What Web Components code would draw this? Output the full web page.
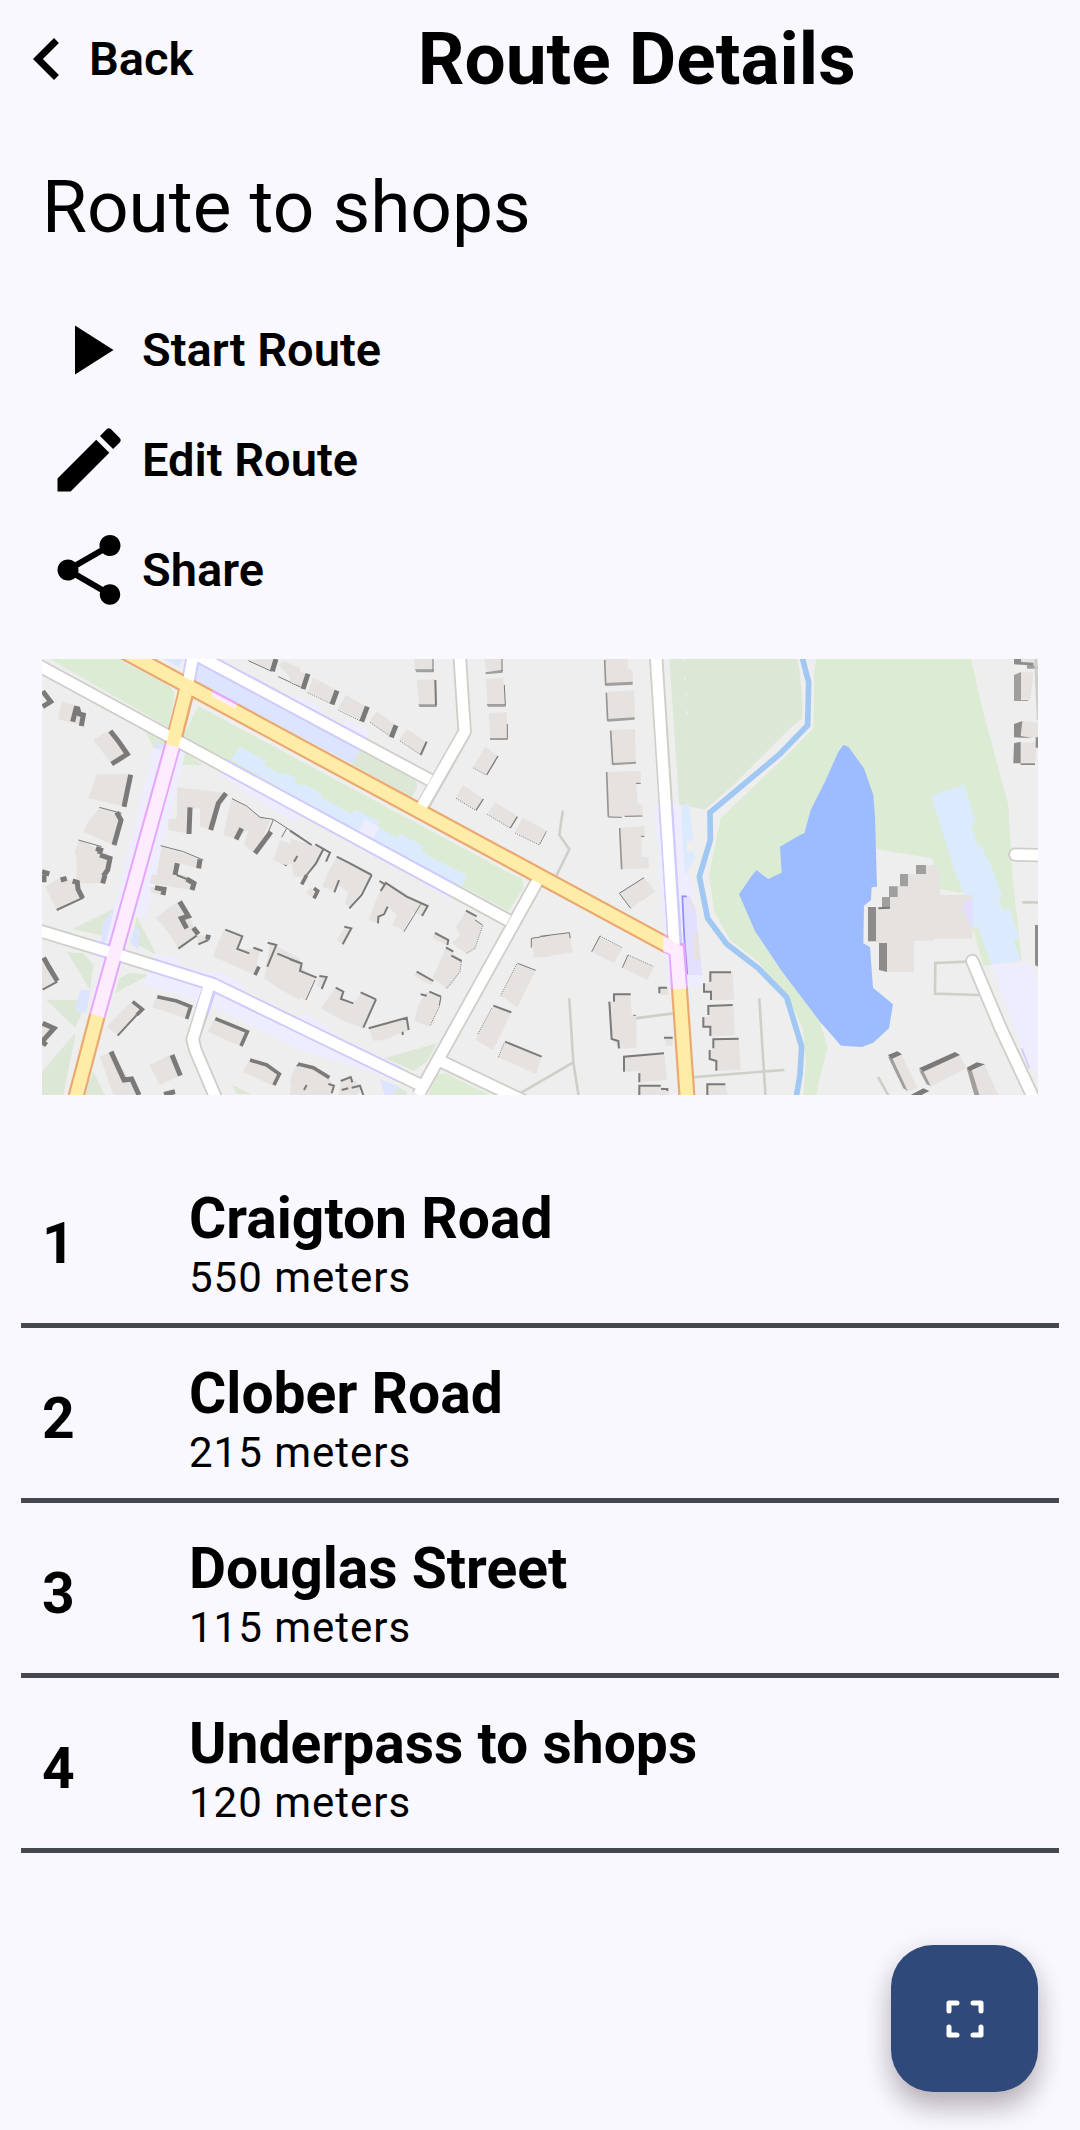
<!DOCTYPE html>
<html lang="en">
<head>
<meta charset="utf-8">
<meta name="viewport" content="width=device-width, initial-scale=1">
<title>Route Details</title>
<style>
  html { background: #f9f8ff; }
  body { margin: 0; font-family: Roboto, "Liberation Sans", sans-serif; color: #000; }
</style>
</head>
<body>
<route-page>
  <page-header slot="header" heading="Route Details"></page-header>
  <span slot="name">Route to shops</span>
  <action-button slot="actions" icon="play">Start Route</action-button>
  <action-button slot="actions" icon="edit">Edit Route</action-button>
  <action-button slot="actions" icon="share">Share</action-button>
  <route-map slot="map"></route-map>
  <waypoint-item slot="waypoints" number="1" distance="550 meters">Craigton Road</waypoint-item>
  <waypoint-item slot="waypoints" number="2" distance="215 meters">Clober Road</waypoint-item>
  <waypoint-item slot="waypoints" number="3" distance="115 meters">Douglas Street</waypoint-item>
  <waypoint-item slot="waypoints" number="4" distance="120 meters">Underpass to shops</waypoint-item>
  <scan-fab slot="fab"></scan-fab>
</route-page>

<template id="map-template">
<style>
  :host { display: block; }
  svg { display: block; width: 100%; height: auto; }
  .g1 { fill: #dcebd3; } .g2 { fill: #dce7d6; } .lb { fill: #dbebfd; } .lv { fill: #eeedff; } .bl { fill: #dce4ff; }
  .line { fill: none; stroke-linejoin: round; }
  .cg { stroke: #cfcfca; stroke-width: 43; } .cl { stroke: #cfcbff; stroke-width: 43; } .w { stroke: #fff; stroke-width: 32; }
  .co { stroke: #e9a970; stroke-width: 51; } .y { stroke: #ffeca6; stroke-width: 38; }
  .cp { stroke: #e7a6fd; stroke-width: 51; } .p { stroke: #fdecfe; stroke-width: 39; }
  .path { stroke: #cfcfca; stroke-width: 8; fill: none; stroke-linecap: round; }
  .b { fill: #e6e2df; } .s { fill: none; stroke: #7b7a78; stroke-width: 15; } .m { fill: none; stroke: #7b7a78; stroke-width: 6; }
  .t { fill: none; stroke: #7b7a78; stroke-width: 3; } .d { fill: none; stroke: #7b7a78; stroke-width: 3; stroke-dasharray: 3 4; }
  .q { fill: #a09f9d; }
</style>
<svg viewBox="6 27 2988 1308" role="img" aria-label="Map of the route">
  <rect x="6" y="27" width="2988" height="1308" fill="#eee"/>
  <!-- grass and parkland -->
  <path class="g1" d="M30 27H235L385 106Q405 122 403 140L385 232ZM475 168L1420 675 1448 687 1450 715 1405 783 430 258ZM312 238L380 275 348 305ZM420 300L490 345H415Z"/>
  <path class="g2" d="M957 300L1118 383Q1134 395 1130 415L1115 443 935 342ZM1888 27H2275L2292 200 2250 235 2005 480 1918 465Z"/>
  <path class="g1" d="M2328 27H2793L2828 180 2905 465 2917 675 2945 930 2830 947 2798 835 2775 730 2700 718V700L2675 625 2510 598H2450V800L2300 1050 2340 1115 2363 1193 2335 1300 2330 1335H2290L2298 1235 2288 1135 2260 1075 2155 935 2070 870 2023 785 2007 675 2042 505 2250 305 2318 237V100Z"/>
  <path class="g2" d="M97 838L220 777 195 845 180 855ZM290 800L350 915 275 875ZM82 907L130 910 160 945 150 1020ZM240 985L270 968 325 975 225 1030ZM18 1049L143 1050 105 1132ZM6 1265L108 1147 70 1335H6ZM160 1265L195 1335H130ZM577 1305L635 1333H590ZM1033 1225L1190 1180 1160 1235 1122 1262ZM1060 1305L1100 1325V1335H1040Z"/>
  <path class="g1" d="M1215 1270L1350 1335H1165L1190 1275Z"/>
  <path d="M1931 27V215" stroke="#eee" stroke-width="4" stroke-dasharray="10 42" transform="rotate(-3.5 1931 27)"/>
  <!-- highlighted areas -->
  <path class="lb" d="M600 290L678 332 672 345 727 375 735 365 772 388 765 398 787 408 792 402 847 432 845 443 933 490 945 477 1018 515 1014 530 1072 565 1080 550 1152 590 1143 605 1280 675 1265 715 1200 690 575 330ZM2673 437L2772 404 2808 518 2794 522 2813 588 2825 585 2842 632H2848L2864 675 2888 740 2875 747 2888 780 2908 775 2938 865 2922 872 2943 932 2855 945 2813 830 2795 835 2764 763 2780 753 2748 675ZM1925 465L1947 462 1960 570 1940 575 1942 605H1960L1966 625 1935 675H1925Z"/>
  <path class="bl" d="M475 40L957 300 937 342 462 92ZM370 27H430L415 50ZM340 275L375 285 355 308ZM185 880V825L222 775 240 860ZM270 875L285 830 300 840 295 900ZM120 1020H150L140 1090 106 1080ZM1020 1288L1075 1308 1060 1335H1035Z"/>
  <path class="lv" d="M550 380L695 478 765 515 790 490 1100 660 1230 755 1240 725 560 350ZM755 160L775 135 845 175 835 205ZM905 230L920 208 988 245 975 280ZM975 507L1018 532 1000 565 955 545ZM1843 467L1920 465 1935 675H1950L1975 825 1990 1005 1940 1015H1885L1858 675ZM310 1005L345 910 420 925 415 945 520 970 540 967 608 1000V1025L1080 1275 1070 1290 780 1200 490 1055ZM780 1115L790 1090 872 1135 860 1150ZM2855 945L2973 940 2994 995V1255L2970 1260Z"/>
  <path d="M365 300L170 1095" stroke="#eeedff" stroke-width="50"/><path d="M340 500L285 790M420 300L300 800" stroke="#eeedff" stroke-width="34"/>
  <!-- water -->
  <path fill="#9dbcff" d="M2410 285L2425 290 2472 355 2500 435 2505 500 2511 710 2495 712 2493 750 2472 767 2470 880 2490 891 2499 1013 2559 1063 2547 1135 2500 1178 2465 1191 2403 1187 2340 1115 2225 963 2145 843 2097 733 2137 675 2150 660 2168 675 2185 687 2205 677 2225 668 2220 590 2280 555 2293 550 2312 480 2355 395 2395 305Z"/>
  <path fill="none" stroke="#eee" stroke-width="34" d="M2286 20L2306 97 2303 226 2220 312 2010 488 2011 570 1978 680 2003 805"/>
  <path fill="none" stroke="#a1c8f2" stroke-width="17" d="M2286 20L2306 97 2303 226 2220 312 2010 488 2011 570 1978 680 2003 805 2060 882 2155 955 2240 1042 2285 1190 2280 1275 2268 1345"/>
  <!-- footpaths -->
  <path class="path" d="M1568 485L1558 555 1588 598 1550 675M1440 1330L1600 1237M1588 1048L1600 1237 1617 1345M1785 1105L1895 1091M1965 1281L2230 1260M2158 1048L2177 1345M2780 935L2686 939 2685 1031 2818 1035M2950 757H3000M2516 1284L2550 1345"/>
  <!-- buildings: each group spans one survey square -->
  <g>
    <path class="b" d="M65 155L102 165 128 195 120 225 54 207ZM160 270L207 240 265 312 215 342ZM170 373L275 372 258 470 145 445ZM180 472L240 490 215 583 130 545 145 515ZM118 570L210 615 195 700H110V620L103 605ZM412 412L550 428 520 538 480 530V475H460L440 550 385 540V508L410 505ZM575 445L665 500 690 515 645 612 612 585 625 540 585 565 550 555ZM365 588L482 628 475 655 420 640 400 700H345ZM715 45L732 33 780 55V110ZM625 30L700 27 700 62Z"/>
    <path class="s" d="M8 124L32 155 8 170M110 168L98 215M112 172L118 192 130 195 124 228M211 243L234 272 262 312 215 342M272 374L252 470M230 487L243 510 222 585M168 595L182 600 178 612M180 615L210 625 203 660 190 678M6 665L28 672M450 472L447 552M558 430L535 460 512 540M605 535L588 568M693 545L645 610M412 640L405 675M480 628L476 655M708 27L697 64M745 628L732 645"/>
    <path class="t" d="M625 32L695 64M715 80L780 110M178 472L245 490M576 446L620 468 660 502 700 508 780 560M362 587L430 605 490 630M115 570L185 590M700 510L685 545M740 535L725 562"/>
    <path class="b" d="M720 570L780 590V640L735 645 700 630Z"/>
  </g>
  <g transform="translate(750)">
    <path class="b" d="M0 50L55 75 35 110 0 97ZM70 83L142 122 125 160 53 125ZM168 134L230 170 213 212 145 175ZM260 185L320 225 303 260 238 215ZM350 237L407 275 390 312 328 270ZM373 27H430V62H375ZM380 90L435 87 438 165H388ZM583 27H636L638 63H588ZM588 86L640 84 646 163H592ZM597 190L650 186 653 264H600ZM585 291L624 318 588 374 550 352ZM518 405L580 447 557 480 497 443ZM617 456L683 500 660 534 592 490ZM697 502L770 542 750 585 675 547Z"/>
    <path class="s" d="M54 71L39 117M141 122L126 163M232 170L215 215M318 226L304 262"/><path class="m" d="M410 275L392 315"/>
    <path class="q" d="M375 58H431V67H380ZM385 163H440V171H388ZM590 162H647V170H594ZM586 67L638 59V68L588 73ZM600 264H653V270H600Z"/>
    <path class="m" d="M436 90L438 166"/><path class="t" d="M429 27V64M636 27V64M643 105L646 166M652 222V266"/><path class="m" style="stroke-width:4" d="M624 318L590 375M580 447L558 481M682 500L661 534"/>
    <path class="d" d="M0 97L38 115M53 128L125 162M145 180L213 214M240 217L303 260M330 273L390 313M550 354L588 375M498 445L557 481M592 493L660 534M675 549L748 585 770 545"/>
    <path class="b" d="M0 565L100 597 80 640 50 680H10ZM140 620L250 675H110Z"/>
    <path class="m" d="M0 542L65 585M76 583L120 608 108 635M100 598L78 640 50 675M140 620L180 640 245 675M22 618L12 635"/>
  </g>
  <g transform="translate(1500)">
    <path class="b" d="M192 27H263V52L278 62V98L195 102ZM200 126L282 120 285 204 203 208ZM213 240L285 237 288 338 218 340ZM200 366L302 363V400H288L294 460 308 464V498L206 500ZM240 533L314 528V560H304V620L326 622V655L244 656ZM0 530L18 545 0 580Z"/>
    <path class="q" d="M195 99L278 95V104L196 108ZM202 207L284 202V209L203 215ZM217 339L288 335V341L218 346Z"/>
    <path fill="none" stroke="#969593" stroke-width="5" d="M194 30L197 104M199 128L203 212M212 242L218 344M200 366L205 500M239 534L245 658"/>
    <path class="t" d="M205 501L245 502M254 499L307 498M288 400H302M303 559H313"/><path class="d" d="M18 545L0 580"/>
  </g>
  <g transform="translate(2250)">
    <path class="b" d="M690 67H730L722 148H688ZM695 213L744 218V263L690 260ZM690 278L741 275 735 340 688 338ZM672 27H744V52L710 50Z"/>
    <path class="q" d="M672 75L693 66V150H715V153H672ZM711 38L744 50V56H711Z"/><path fill="#8d8c8a" d="M672 27H693V36L730 38V46L672 43ZM672 222L697 213 692 258 728 264 672 262ZM672 280L692 275V340H670ZM737 262H744V293H737ZM692 340H735V345H692Z"/>
    <path d="M737 27L745 210" stroke="#cfcfca" stroke-width="9"/>
  </g>
  <g transform="translate(0 675)">
    <path class="b" d="M15 35L60 8 110 20 130 72 50 105ZM120 0H200L190 22 125 12ZM335 0H440L465 25 455 45 330 25ZM332 35L375 45 365 60 330 52ZM415 78L450 125 470 182 415 221 390 180 372 155 347 128ZM470 182L510 180 505 200 475 208ZM552 163L608 183 592 225 660 220 645 300 590 275 520 245 530 215ZM690 205L780 250V375L715 340 673 310ZM6 250L52 320 6 345ZM350 365L450 395 440 430 337 397ZM275 378L312 403 235 482 200 455ZM524 430L625 470 605 515 503 470ZM328 570L390 540 425 600 360 630ZM180 545L215 530 300 660H220ZM630 553L722 595 705 635 608 590ZM6 440L50 460 6 520ZM764 580L780 570V640L748 620Z"/>
    <path class="s" d="M12 0V22M62 15L80 10M98 18L112 22 114 42 128 70M195 0L188 25M440 12L462 25 456 45M345 38L372 43 369 60M419 80L445 123 424 130 440 160M460 158L475 178M497 185L511 188M11 248L26 275 52 318M213 530L252 615 275 612 297 660M396 540L421 602M8 445L42 460 6 500 20 510M372 658L405 650"/>
    <path class="s" style="stroke-width:11" d="M278 380L307 403 290 420M352 365L410 378 452 395 440 432M526 431L622 470 603 513M630 555L680 570 718 597 702 630M657 275L645 300"/>
    <path class="m" d="M410 0L460 20M130 68L50 105M470 182L415 221M505 195L475 208M556 164L607 184 592 222 628 235M640 218L668 228M683 203L709 210 682 275M712 236L780 264M290 420L233 482M8 344L52 320M780 570L770 572"/>
  </g>
  <g transform="translate(750 675)">
    <path class="b" d="M110 0H245L180 100 165 85 175 50 145 30 135 50 97 35ZM60 40L85 50 75 70 47 55ZM280 20L410 90 395 122 370 110 342 168 307 150 320 120 293 95 262 145 235 135ZM165 155L180 160 158 207 140 195ZM530 105L578 150 555 220 530 235 485 205 510 180 498 155ZM435 172L478 200 470 210 428 190ZM468 217L515 258 510 290 490 325 470 340 428 310ZM380 290L428 315 425 330 372 303ZM410 350L452 365 450 395 420 455 373 437 385 390ZM0 255L80 308 48 378 0 350ZM90 300L110 305 95 340 80 330ZM135 340L160 350 158 375 190 385 215 353 260 374 220 460 155 435 92 400ZM236 460L350 425 358 465 280 495 250 497ZM725 188L780 182V245L732 248ZM682 263L737 286 682 397 632 362ZM610 392L664 412 610 525 557 495 562 480ZM645 500L755 545 738 597 625 547ZM30 568L100 590 130 630 125 660H0L5 600ZM155 610L190 610 215 640 200 660H145Z"/>
    <path class="s" style="stroke-width:11" d="M50 0L35 28M72 40L83 48 72 70M24 567L70 578 118 608"/>
    <path class="m" d="M147 15L133 52M245 0L215 60 178 100M268 18L285 28 272 48M293 95L282 118 265 125 264 145M163 155L184 160 158 208M285 22L350 65 413 93 396 123M435 174L475 195 472 210M528 107L560 124M468 217L490 230M484 242L515 258M380 290L430 318M392 358L410 362M418 350L453 365M0 253L35 265 30 288 80 308M88 303L110 306 95 342M137 338L160 350 153 372 190 385M212 352L258 373M258 373L220 458M236 460L350 428 356 465M338 470L338 480M610 392L664 412M645 500L755 545M115 627L132 632 125 655M50 630L42 645M152 618L182 606 187 622M155 645L175 640M185 638L210 632 220 660"/>
    <path class="t" d="M392 88L342 170M75 315L48 375M724 190L780 182M724 190V218M683 265L737 286M555 135L577 150M453 365L448 390"/><path class="d" d="M578 152L555 220 530 235M514 260L510 290 470 340M452 370L448 395 420 453M680 267L632 362M605 400L562 480M642 505L625 547"/>
  </g>
  <g transform="translate(1500 675)">
    <path class="b" d="M240 52L312 8 346 50 272 100ZM0 187L88 174 98 232 0 247ZM178 182L247 218 222 265 155 230ZM265 240L342 275 322 314 247 278ZM360 340L385 338V360H360ZM222 360H272L276 420 288 425 290 518 237 522 215 490 208 382H222ZM375 490L398 488V512H378ZM252 545L374 538 380 615 302 622 296 588 254 590ZM298 635L362 632 385 645V660H300ZM508 295L578 290 582 374 515 376 513 350 492 350V325H508ZM505 395L580 390 585 480 514 485 510 455 490 450V425H505ZM520 495L597 490 602 584 532 587 528 555 510 550V525H520ZM500 630L555 625 563 660H500Z"/>
    <path class="m" d="M358 355V338H381M222 380V358H272M208 380L215 492 235 498 237 520M372 488H398M252 590V545L372 535M298 595V622M298 660V632H362M363 642H382V648M511 320V292H573M492 325V350H513V375M505 420V393L578 390M490 427V455H511V483M520 520V493L596 491M509 525V552L529 558V587M502 660V628H556"/>
    <path class="t" d="M312 8L238 55 272 100M0 184L88 173 91 190M155 230L180 183M247 278L264 240M280 421H288"/><path class="d" d="M180 183L247 218M264 240L340 274"/>
    <path fill="#e3dfff" d="M425 62H448L467 100 487 300H440Z"/><path class="b" d="M448 65L462 90 460 105 450 92ZM458 175H475L481 255 462 255Z"/><path d="M440 64H427L433 190 442 298" fill="none" stroke="#8f8dff" stroke-width="5"/>
  </g>
  <g transform="translate(2250 675)">
    <path class="b" d="M408 -30H435L450 -5V60H547V191H432V197H372V291H290V204H258V100L300 98V66H323V34H354V-3H408ZM333 535L383 640 350 650 305 548ZM508 540L530 580 420 635 397 585ZM585 570L625 660H565L540 590Z"/>
    <path fill="#e3defd" d="M515 95L535 72H547V160Z"/>
    <path class="q" d="M378 -30H408V-3H378ZM330 -3H354V34H330ZM297 34H323V66H297ZM276 66H300V98H276ZM294 545L306 547 353 648 340 640ZM387 585L400 588 422 633 410 628ZM530 580L545 585 568 660H553Z"/>
    <path fill="#8d8c8a" d="M234 96H258V199H234ZM267 204H291V291L267 285ZM735 150H744V275L735 270Z"/><path class="m" d="M265 100L300 98"/>
    <path fill="#7b7a78" d="M294 540L322 529 336 538 305 552ZM387 580L495 531 510 540 400 590ZM530 578L560 562 585 568 540 588ZM362 660L400 640 418 648 395 660Z"/>
  </g>
  <!-- street casings -->
  <g class="line cg">
    <path d="M-20 38L1405 811M442 0L1170 390M1258 0L1274 245 1150 465M1847 0L1905 890M-10 840L222 910 520 1003 780 1130 1145 1307M508 1015L458 1168 466 1200 530 1350M1491 695L1135 1335M1205 1235L1460 1357"/>
    <path stroke-linecap="round" d="M2797 933L2882 1135 2983 1350M2926 614L3020 616"/>
  </g>
  <path class="line cl" d="M550 347L1240 721M442 0L970 283M462 0L445 95M1877 467L1905 890M160 891L258 921M335 945L520 1003 780 1130 1080 1275M508 1015L485 1085"/>
  <path d="M2945 1195L2968 1255" stroke="#cfcbff" stroke-width="5"/>
  <path class="line co" d="M220 -13L1885 887M440 120L398 285M172 1097L108 1340M1918 1010L1941 1340"/>
  <path class="line cp" d="M398 285L290 675 172 1097M1910 880L1918 1015"/>
  <path fill="#e7a6fd" d="M1870 853L1930 885 1932 900 1885 915 1870 907Z"/>
  <!-- street surfaces -->
  <g class="line w">
    <path d="M-20 38L1405 811M442 0L1170 390M462 0L442 110M1258 0L1274 245 1146 468M1847 0L1903 885M-10 840L222 910 520 1003 780 1130 1145 1307M508 1003L458 1168 466 1200 530 1350M1491 695L1135 1335M1195 1230L1460 1357"/>
    <path stroke-linecap="round" d="M2797 933L2882 1135 2983 1350M2926 614L3020 616"/>
  </g>
  <path class="line y" d="M220 -13L1890 890M440 115L396 290M172 1097L108 1340M1918 1010L1941 1340"/>
  <path class="line p" d="M398 287L290 675 172 1097M1909 890L1919 1017"/>
  <path fill="#fdecfe" d="M1870 860L1926 889 1925 905 1890 913 1870 903ZM520 122L593 160 585 176 513 137Z"/>
  <path d="M517 123L592 162" stroke="#e7a6fd" stroke-width="6"/>
</svg>
</template>

<script>
const ICONS = {
  back: '<path d="M15.41 16.59L10.83 12l4.58-4.59L14 6l-6 6 6 6z"/>',
  play: '<path d="M8 5v14l11-7z"/>',
  edit: '<path d="M3 17.25V21h3.75L17.81 9.94l-3.75-3.75zM20.71 7.04a1 1 0 0 0 0-1.41l-2.34-2.34a1 1 0 0 0-1.41 0l-1.83 1.83 3.75 3.75z"/>',
  share: '<path d="M18 16.08c-.76 0-1.44.3-1.96.77L8.91 12.7c.05-.23.09-.46.09-.7s-.04-.47-.09-.7l7.05-4.11c.54.5 1.25.81 2.04.81 1.66 0 3-1.34 3-3s-1.34-3-3-3-3 1.34-3 3c0 .24.04.47.09.7L8.04 9.81C7.5 9.31 6.79 9 6 9c-1.66 0-3 1.34-3 3s1.34 3 3 3c.79 0 1.5-.31 2.04-.81l7.12 4.16c-.05.21-.08.43-.08.65 0 1.61 1.31 2.92 2.92 2.92s2.92-1.31 2.92-2.92-1.31-2.92-2.92-2.92z"/>'
};
const icon = name => `<svg viewBox="0 0 24 24" aria-hidden="true">${ICONS[name]}</svg>`;
const BUTTON = 'button{display:flex;align-items:center;border:0;margin:0;padding:0;background:none;color:inherit;font:600 47px/56px Roboto,"Liberation Sans",sans-serif;cursor:pointer}svg{display:block;flex:none;width:84px;height:84px;fill:currentColor}';

class ShadowElement extends HTMLElement {
  constructor() { super(); this.attachShadow({ mode: 'open' }); }
  connectedCallback() { this.shadowRoot.innerHTML = this.render(); }
}

customElements.define('route-page', class extends ShadowElement {
  render() {
    return `<style>
      :host{display:flex;flex-direction:column;min-height:100vh;box-sizing:border-box;padding-bottom:38px;background:#f9f8ff}
      h2{margin:45px 42px 44px;font-weight:400;font-size:73px;line-height:88px}
      .actions{display:flex;flex-direction:column;align-items:flex-start;padding:0 47px}
      .map{margin:34px 42px 58px}
      .waypoints{display:flex;flex-direction:column;padding:0 21px}
      .fab{display:flex;justify-content:flex-end;margin-top:auto;padding:42px 42px 0}
    </style>
    <slot name="header"></slot>
    <main><h2><slot name="name"></slot></h2>
    <div class="actions"><slot name="actions"></slot></div>
    <div class="map"><slot name="map"></slot></div>
    <div class="waypoints" role="list"><slot name="waypoints"></slot></div></main>
    <div class="fab"><slot name="fab"></slot></div>`;
  }
});

customElements.define('page-header', class extends ShadowElement {
  render() {
    return `<style>${BUTTON}
      :host{display:block}
      header{display:flex;align-items:center;min-height:118px;padding-left:5px}
      h1{flex:1;margin:0;text-align:center;font-weight:700;font-size:73px;line-height:88px}
    </style>
    <header><button type="button">${icon('back')}Back</button><h1>${this.getAttribute('heading')}</h1></header>`;
  }
});

customElements.define('action-button', class extends ShadowElement {
  render() {
    return `<style>${BUTTON}
      :host{display:block}
      button{min-height:110px;gap:11px}
    </style>
    <button type="button">${icon(this.getAttribute('icon'))}<slot></slot></button>`;
  }
});

customElements.define('route-map', class extends HTMLElement {
  constructor() {
    super();
    this.attachShadow({ mode: 'open' }).append(document.getElementById('map-template').content.cloneNode(true));
  }
});

customElements.define('waypoint-item', class extends ShadowElement {
  render() {
    this.setAttribute('role', 'listitem');
    return `<style>
      :host{display:flex;align-items:center;padding:32px 21px 20px;border-bottom:5px solid #46484f}
      .number{flex:none;width:147px;font-weight:700;font-size:57px;line-height:68px}
      .name{font-weight:700;font-size:57px;line-height:68px}
      .distance{font-size:42px;line-height:50px;letter-spacing:1px}
    </style>
    <div class="number">${this.getAttribute('number')}</div>
    <div><div class="name"><slot></slot></div><div class="distance">${this.getAttribute('distance')}</div></div>`;
  }
});

customElements.define('scan-fab', class extends ShadowElement {
  render() {
    return `<style>
      :host{display:block}
      button{display:grid;place-items:center;width:147px;height:147px;padding:0;border:0;border-radius:42px;background:#30497b;color:#fff;box-shadow:0 16px 26px rgba(40,24,24,.27),0 4px 30px rgba(40,30,40,.08);cursor:pointer}
      svg{display:block;width:63px;height:63px}
    </style>
    <button type="button" aria-label="Full screen map"><svg viewBox="0 0 63 63" fill="none" stroke="#fff" stroke-width="5" stroke-linecap="round" stroke-linejoin="round" aria-hidden="true"><path d="M16 24v-8h8M40 16h8v8M48 40v8h-8M24 48h-8v-8"/></svg></button>`;
  }
});
</script>
</body>
</html>
